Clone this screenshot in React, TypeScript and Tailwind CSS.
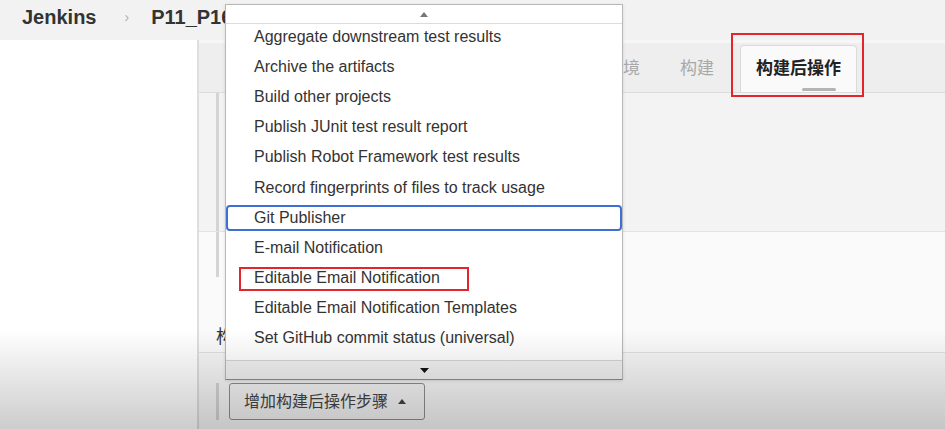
import { FC } from "react";

const items = [
	"Aggregate downstream test results",
	"Archive the artifacts",
	"Build other projects",
	"Publish JUnit test result report",
	"Publish Robot Framework test results",
	"Record fingerprints of files to track usage",
	"Git Publisher",
	"E-mail Notification",
	"Editable Email Notification",
	"Editable Email Notification Templates",
	"Set GitHub commit status (universal)",
];

const MenuRow: FC<{ label: string; index: number }> = ({ label, index }) => {
	return (
		<div className="relative h-[30.2px] pl-[28px] pb-[5px] flex items-center text-[16px] text-[#333] whitespace-nowrap">
			{label}
			{index === 6 && (
				<span className="absolute left-0 right-0 top-0 h-[26px] rounded-[4px] border-2 border-[#3d6fd6]" />
			)}
			{index === 8 && (
				<span className="absolute left-[13px] top-[1px] w-[230px] h-[24px] border-2 border-[#e3262b]" />
			)}
		</div>
	);
};

const StepMenu = () => {
	return (
		<div className="absolute left-[225px] top-[4px] w-[398px] h-[376px] z-10 flex flex-col bg-white border border-[#b8b8b8] border-b-[#8c8c8c] shadow-[0_1px_3px_rgba(0,0,0,0.12)]">
			<div className="h-[19px] shrink-0 border-b border-[#dcdcdc] flex items-center justify-center">
				<svg width="8" height="5" viewBox="0 0 8 5">
					<path d="M0 5 L4 0 L8 5 Z" fill="#777" />
				</svg>
			</div>
			<div className="h-[336px] shrink-0 overflow-hidden">
				{items.map((label, i) => (
					<MenuRow key={label} label={label} index={i} />
				))}
			</div>
			<div className="h-[19px] shrink-0 border-t border-[#d4d4d4] bg-[#f1f1f1] flex items-center justify-center">
				<svg width="9" height="5" viewBox="0 0 9 5">
					<path d="M0 0 L9 0 L4.5 5 Z" fill="#111" />
				</svg>
			</div>
		</div>
	);
};

export default function App() {
	return (
		<div
			className="relative w-[945px] h-[429px] overflow-hidden bg-white"
			style={{ fontFamily: '"Liberation Sans", "Noto Sans CJK SC", sans-serif' }}
		>
			{/* breadcrumb bar */}
			<div className="h-[40px] bg-[#f2f2f2] flex items-center pl-[22px] pb-[6px]">
				<span className="text-[20px] font-bold text-[#333]">Jenkins</span>
				<span className="ml-[28px] text-[14px] text-[#b0b0b0]">›</span>
				<span className="ml-[22px] text-[20px] font-bold text-[#333]">P11_P16</span>
			</div>

			<div className="flex h-[389px]">
				<div className="w-[199px] shrink-0 bg-white border-r-2 border-[#dedede]" />

				<div className="flex-1 flex flex-col bg-[#f6f6f6] pt-[3px]">
					{/* tabs */}
					<div className="h-[50px] shrink-0 bg-[#eeeeee] border-b border-[#dcdcdc] flex items-end justify-end pr-[88px] gap-[12px]">
						<div className="h-[47px] px-[14px] flex items-center text-[17px] text-[#a8a8a8]">构建环境</div>
						<div className="h-[47px] px-[14px] flex items-center text-[17px] text-[#a8a8a8]">构建</div>
						<div className="relative h-[47px] w-[117px] flex items-center justify-center bg-[#fafafa] border border-b-0 border-[#dadada] rounded-t-[4px] text-[17px] font-bold text-[#222]">
							构建后操作
							<span className="absolute bottom-[1px] left-[61px] w-[34px] h-[3px] rounded-full bg-[#b4b4b4]" />
							<span className="absolute -left-[10px] -right-[8px] -top-[13px] -bottom-[5px] border-2 border-[#e3262b]" />
						</div>
					</div>

					{/* post-build section */}
					<div className="h-[139px] shrink-0 bg-[#f3f3f3] border-b border-[#e2e2e2] pl-[17px]">
						<div className="h-full w-[3px] bg-[#d4d4d4]" />
					</div>
					<div className="h-[121px] shrink-0 bg-[#fafafa] border-b border-[#e0e0e0] flex flex-col pl-[17px]">
						<div className="h-[45px] w-[3px] bg-[#d4d4d4]" />
						<div className="mt-auto pb-[3px] text-[18px] text-[#333] leading-[24px]">构建后操作</div>
					</div>
					<div className="flex-1 pt-[30px] pl-[17px]">
						<div className="flex border-l-[3px] border-[#d4d4d4] pl-[10px]">
							<button className="h-[37px] w-[196px] flex items-center pl-[14px] gap-[10px] bg-[#f4f4f4] border border-[#8e8e8e] rounded-[3px] text-[16px] text-[#444]">
								增加构建后操作步骤
								<svg width="8" height="5" viewBox="0 0 8 5">
									<path d="M0 5 L4 0 L8 5 Z" fill="#444" />
								</svg>
							</button>
						</div>
					</div>
				</div>
			</div>

			<StepMenu />

			{/* video vignette at the bottom */}
			<div className="absolute inset-x-0 bottom-0 h-[100px] z-20 pointer-events-none bg-linear-to-b from-transparent to-black/20" />
		</div>
	);
}
